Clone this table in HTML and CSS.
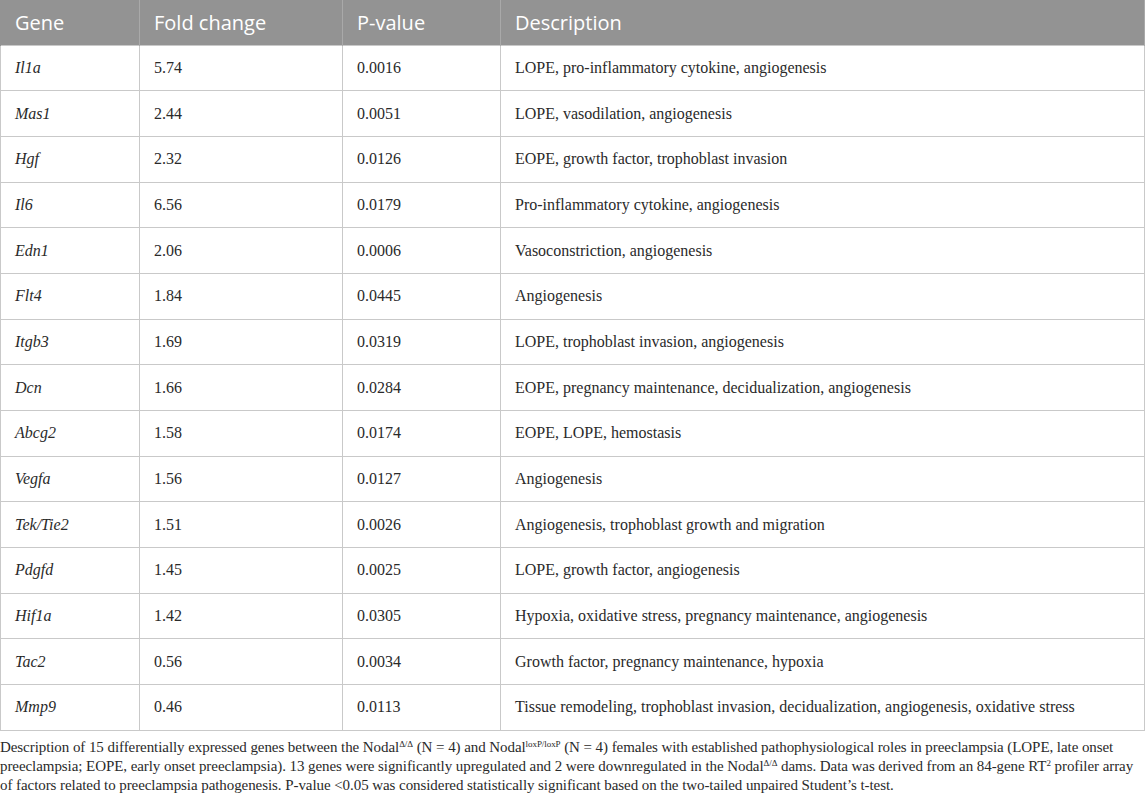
FILE: index.html
```html
<!DOCTYPE html>
<html>
<head>
<meta charset="utf-8">
<link rel="stylesheet" href="styles.css">
</head>
<body>
<div class="wrap">
<table class="genes">
  <colgroup>
    <col class="c-gene">
    <col class="c-fold">
    <col class="c-p">
    <col class="c-desc">
  </colgroup>
  <thead>
    <tr><th>Gene</th><th>Fold change</th><th>P-value</th><th>Description</th></tr>
  </thead>
  <tbody>
    <tr><td><i>Il1a</i></td><td>5.74</td><td>0.0016</td><td>LOPE, pro-inflammatory cytokine, angiogenesis</td></tr>
    <tr><td><i>Mas1</i></td><td>2.44</td><td>0.0051</td><td>LOPE, vasodilation, angiogenesis</td></tr>
    <tr><td><i>Hgf</i></td><td>2.32</td><td>0.0126</td><td>EOPE, growth factor, trophoblast invasion</td></tr>
    <tr><td><i>Il6</i></td><td>6.56</td><td>0.0179</td><td>Pro-inflammatory cytokine, angiogenesis</td></tr>
    <tr><td><i>Edn1</i></td><td>2.06</td><td>0.0006</td><td>Vasoconstriction, angiogenesis</td></tr>
    <tr><td><i>Flt4</i></td><td>1.84</td><td>0.0445</td><td>Angiogenesis</td></tr>
    <tr><td><i>Itgb3</i></td><td>1.69</td><td>0.0319</td><td>LOPE, trophoblast invasion, angiogenesis</td></tr>
    <tr><td><i>Dcn</i></td><td>1.66</td><td>0.0284</td><td>EOPE, pregnancy maintenance, decidualization, angiogenesis</td></tr>
    <tr><td><i>Abcg2</i></td><td>1.58</td><td>0.0174</td><td>EOPE, LOPE, hemostasis</td></tr>
    <tr><td><i>Vegfa</i></td><td>1.56</td><td>0.0127</td><td>Angiogenesis</td></tr>
    <tr><td><i>Tek/Tie2</i></td><td>1.51</td><td>0.0026</td><td>Angiogenesis, trophoblast growth and migration</td></tr>
    <tr><td><i>Pdgfd</i></td><td>1.45</td><td>0.0025</td><td>LOPE, growth factor, angiogenesis</td></tr>
    <tr><td><i>Hif1a</i></td><td>1.42</td><td>0.0305</td><td>Hypoxia, oxidative stress, pregnancy maintenance, angiogenesis</td></tr>
    <tr><td><i>Tac2</i></td><td>0.56</td><td>0.0034</td><td>Growth factor, pregnancy maintenance, hypoxia</td></tr>
    <tr><td><i>Mmp9</i></td><td>0.46</td><td>0.0113</td><td>Tissue remodeling, trophoblast invasion, decidualization, angiogenesis, oxidative stress</td></tr>
  </tbody>
</table>
<p class="caption">Description of 15 differentially expressed genes between the Nodal<sup>Δ/Δ</sup> (N = 4) and Nodal<sup>loxP/loxP</sup> (N = 4) females with established pathophysiological roles in preeclampsia (LOPE, late onset preeclampsia; EOPE, early onset preeclampsia). 13 genes were significantly upregulated and 2 were downregulated in the Nodal<sup>Δ/Δ</sup> dams. Data was derived from an 84-gene RT<sup>2</sup> profiler array of factors related to preeclampsia pathogenesis. P-value &lt;0.05 was considered statistically significant based on the two-tailed unpaired Student’s t-test.</p>
</div>
</body>
</html>
```

FILE: styles.css
```css
html, body {
  margin: 0;
  padding: 0;
  background: #ffffff;
}

.wrap {
  width: 1145px;
}

.genes {
  width: 1145px;
  border-collapse: collapse;
  table-layout: fixed;
  font-family: "Liberation Serif", "Times New Roman", serif;
  font-size: 16px;
  color: #2a2a2a;
}

.c-gene { width: 139px; }
.c-fold { width: 203px; }
.c-p { width: 158px; }
.c-desc { width: auto; }

.genes th {
  background: #939393;
  color: #ffffff;
  font-family: "Open Sans", "Liberation Sans", sans-serif;
  font-weight: 400;
  font-size: 20px;
  text-align: left;
  height: 45px;
  padding: 0 14px;
  box-sizing: border-box;
  border-right: 1px solid #a9a9a9;
  border-left: 1px solid #939393;
}

.genes td {
  height: 45.7px;
  padding: 0 14px;
  box-sizing: border-box;
  border: 1px solid #c9c9c9;
  vertical-align: middle;
  white-space: nowrap;
}

.caption {
  margin: 7px 0 0 0;
  font-family: "Liberation Serif", "Times New Roman", serif;
  font-size: 15px;
  line-height: 19px;
  letter-spacing: -0.07px;
  color: #2a2a2a;
}

.caption sup {
  font-size: 9px;
  line-height: 0;
  vertical-align: 5px;
}
```
